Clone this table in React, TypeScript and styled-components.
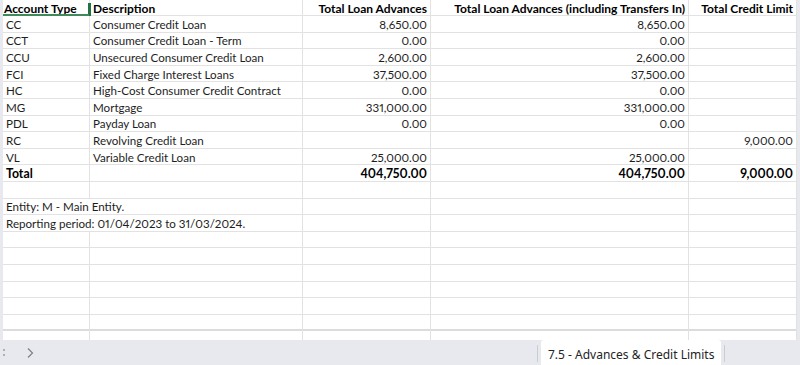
import React from 'react';
import styled, { createGlobalStyle } from 'styled-components';

const Global = createGlobalStyle`
  html, body { margin: 0; padding: 0; background: #e7e9ef; overflow: hidden; }
  #root { width: 800px; height: 365px; }
`;

const Frame = styled.div`
  width: 800px;
  height: 365px;
  display: flex;
  flex-direction: column;
  background: #e7e9ef;
`;

const SheetArea = styled.div`
  height: 340px;
  flex: none;
  display: flex;
  padding: 0 3px;
  box-sizing: border-box;
  overflow: hidden;
`;

const Grid = styled.div`
  flex: 1;
  background: #ffffff;
  display: grid;
  grid-template-columns: 87px 213px 128px 258px 108px;
  grid-template-rows: 16px;
  grid-auto-rows: 16.6px;
  align-content: start;
  font-family: Lato, "Liberation Sans", sans-serif;
  font-size: 11.6px;
  font-variant-numeric: proportional-nums;
  color: #1e1e1e;
  overflow: hidden;
`;

type CellProps = { $right?: boolean; $bold?: boolean; $head?: boolean; $span?: number; $thick?: boolean };

const Cell = styled.div<CellProps>`
  box-sizing: border-box;
  border-right: 1px solid #e2e2e2;
  border-bottom: ${p => (p.$thick ? '2px solid #dcdcdc' : '1px solid #e2e2e2')};
  display: flex;
  align-items: center;
  justify-content: ${p => (p.$right ? 'flex-end' : 'flex-start')};
  padding: 1px ${p => (p.$right ? '3px' : '2px')} 0 ${p => (p.$right ? '2px' : '3px')};
  white-space: nowrap;
  font-size: ${p => (p.$head ? '12px' : p.$bold ? '12.3px' : '11.6px')};
  font-weight: ${p => (p.$bold || p.$head ? 700 : 400)};
  color: ${p => (p.$bold || p.$head ? '#000' : '#1e1e1e')};
  grid-column: span ${p => p.$span ?? 1};
  min-width: 0;
`;

const SelectedCell = styled(Cell)`
  position: relative;
  padding-left: 1px;
  &::after {
    content: '';
    position: absolute;
    left: 0;
    right: 0;
    bottom: -1px;
    height: 2px;
    background: #3f8a5a;
  }
  &::before {
    content: '';
    position: absolute;
    right: -2px;
    top: 3px;
    bottom: -1px;
    width: 3px;
    background: #217346;
  }
`;

const TabBar = styled.div`
  height: 25px;
  flex: none;
  display: flex;
  align-items: stretch;
  padding-right: 72px;
  font-family: "Noto Sans", "Open Sans", sans-serif;
`;

const NavButton = styled.div<{ $w: number }>`
  width: ${p => p.$w}px;
  display: flex;
  align-items: center;
  justify-content: center;
  color: #8a8d93;
`;

const Spacer = styled.div`
  flex: 1;
`;

const Separator = styled.div`
  width: 1px;
  margin: 5px 3px 3px 3px;
  background: #c9ccd3;
`;

const SheetTab = styled.div`
  width: 180px;
  background: #ffffff;
  border-radius: 3px 3px 0 0;
  box-sizing: border-box;
  padding: 3px 0 0 7px;
  display: flex;
  align-items: center;
  font-size: 12px;
  color: #242424;
  white-space: nowrap;
`;

type Row = { code: string; desc: string; a?: string; b?: string; c?: string };

const rows: Row[] = [
  { code: 'CC', desc: 'Consumer Credit Loan', a: '8,650.00', b: '8,650.00' },
  { code: 'CCT', desc: 'Consumer Credit Loan - Term', a: '0.00', b: '0.00' },
  { code: 'CCU', desc: 'Unsecured Consumer Credit Loan', a: '2,600.00', b: '2,600.00' },
  { code: 'FCI', desc: 'Fixed Charge Interest Loans', a: '37,500.00', b: '37,500.00' },
  { code: 'HC', desc: 'High-Cost Consumer Credit Contract', a: '0.00', b: '0.00' },
  { code: 'MG', desc: 'Mortgage', a: '331,000.00', b: '331,000.00' },
  { code: 'PDL', desc: 'Payday Loan', a: '0.00', b: '0.00' },
  { code: 'RC', desc: 'Revolving Credit Loan', c: '9,000.00' },
  { code: 'VL', desc: 'Variable Credit Loan', a: '25,000.00', b: '25,000.00' },
];

const EmptyRow: React.FC<{ thick?: boolean }> = ({ thick }) => (
  <>
    <Cell $thick={thick} />
    <Cell $thick={thick} />
    <Cell $thick={thick} />
    <Cell $thick={thick} />
    <Cell $thick={thick} />
  </>
);

export default function App() {
  return (
    <Frame>
      <Global />
      <SheetArea>
        <Grid>
          <SelectedCell $head>Account Type</SelectedCell>
          <Cell $head>Description</Cell>
          <Cell $head $right>Total Loan Advances</Cell>
          <Cell $head $right>Total Loan Advances (including Transfers In)</Cell>
          <Cell $head $right>Total Credit Limit</Cell>

          {rows.map(r => (
            <React.Fragment key={r.code}>
              <Cell>{r.code}</Cell>
              <Cell>{r.desc}</Cell>
              <Cell $right>{r.a}</Cell>
              <Cell $right>{r.b}</Cell>
              <Cell $right>{r.c}</Cell>
            </React.Fragment>
          ))}

          <Cell $bold>Total</Cell>
          <Cell />
          <Cell $bold $right>404,750.00</Cell>
          <Cell $bold $right>404,750.00</Cell>
          <Cell $bold $right>9,000.00</Cell>

          <EmptyRow />

          <Cell $span={2}>Entity: M - Main Entity.</Cell>
          <Cell />
          <Cell />
          <Cell />

          <Cell $span={2}>Reporting period: 01/04/2023 to 31/03/2024.</Cell>
          <Cell />
          <Cell />
          <Cell />

          <EmptyRow />
          <EmptyRow />
          <EmptyRow />
          <EmptyRow />
          <EmptyRow />
          <EmptyRow thick />
          <EmptyRow />
        </Grid>
      </SheetArea>
      <TabBar>
        <NavButton $w={8}>
          <svg width="4" height="12" viewBox="0 0 4 12">
            <circle cx="2" cy="3" r="1" fill="#9a9da3" />
            <circle cx="2" cy="8" r="1" fill="#9a9da3" />
          </svg>
        </NavButton>
        <NavButton $w={44}>
          <svg width="8" height="12" viewBox="0 0 8 12">
            <polyline points="2,1.5 6.5,6 2,10.5" fill="none" stroke="#7d8087" strokeWidth="1.2" />
          </svg>
        </NavButton>
        <Spacer />
        <Separator />
        <SheetTab>7.5 - Advances &amp; Credit Limits</SheetTab>
        <Separator />
      </TabBar>
    </Frame>
  );
}
